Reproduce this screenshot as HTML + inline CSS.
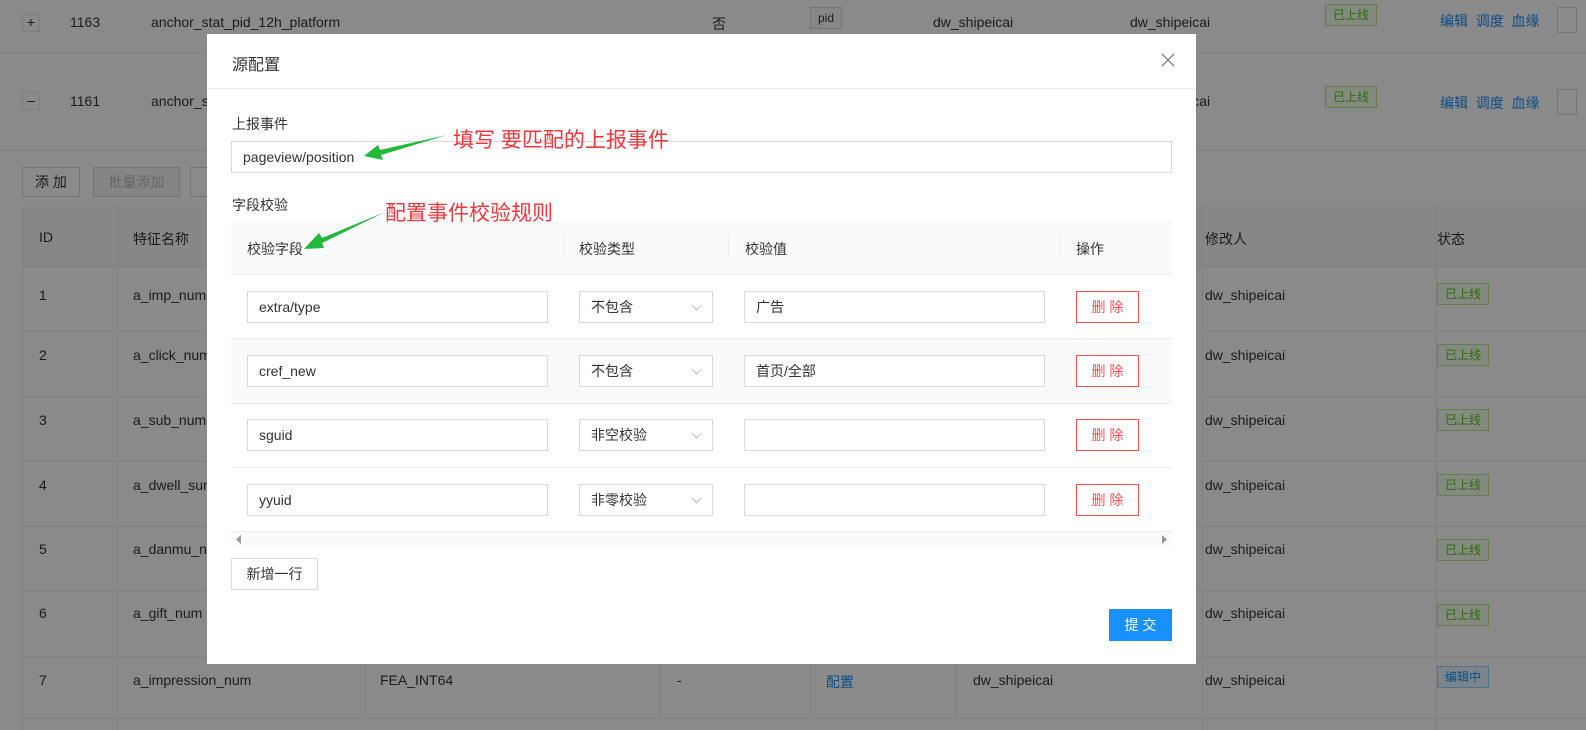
<!DOCTYPE html>
<html><head><meta charset="utf-8"><style>
*{box-sizing:border-box;margin:0;padding:0}
body{width:1586px;height:730px;position:relative;overflow:hidden;background:#fff;font-family:"Liberation Sans","Noto Sans CJK SC",sans-serif;font-size:14px;color:#333}
.a{position:absolute;white-space:nowrap}
.hl{position:absolute;height:1px;background:#ececec}
.vl{position:absolute;width:1px;background:#ececec}
.tag{position:absolute;font-size:12px;border:1px solid #b7eb8f;background:#f6ffed;color:#52c41a;padding:0 7px;height:22px;line-height:20px}
.lk{color:#1890ff}
.btn{position:absolute;border:1px solid #d9d9d9;background:#fff;height:30px;line-height:28px;text-align:center;font-size:14px}
.ov{position:absolute;left:0;top:0;width:1586px;height:730px;background:rgba(0,0,0,.46)}
.modal{position:absolute;left:207px;top:34px;width:989px;height:630px;background:#fff}
.inp{position:absolute;height:32px;border:1px solid #d9d9d9;padding-left:11px;line-height:30px;font-size:14px;color:#333}
.del{position:absolute;height:32px;width:63px;border:1px solid #ff4d4f;color:#ff4d4f;text-align:center;line-height:30px;font-size:14px}
.chev{position:absolute;right:12px;top:10px;width:7px;height:7px;border-right:1px solid #bfbfbf;border-bottom:1px solid #bfbfbf;transform:rotate(45deg)}
</style></head><body>
<div class="a" style="left:22px;top:14px;width:18px;height:18px;border:1px solid #e8e8e8;text-align:center;line-height:15px">+</div>
<div class="a" style="left:70px;top:14px">1163</div>
<div class="a" style="left:151px;top:14px">anchor_stat_pid_12h_platform</div>
<div class="a" style="left:712px;top:14px">否</div>
<div class="a" style="left:810px;top:7px;border:1px solid #d9d9d9;background:#fafafa;font-size:12px;padding:0 7px;height:22px;line-height:20px">pid</div>
<div class="a" style="left:933px;top:14px">dw_shipeicai</div>
<div class="a" style="left:1130px;top:14px">dw_shipeicai</div>
<div class="tag" style="left:1325px;top:4px">已上线</div>
<div class="a lk" style="left:1440px;top:11px">编辑 &nbsp;调度 &nbsp;血缘</div>
<div class="a" style="left:1557px;top:7px;width:20px;height:26px;border:1px solid #d9d9d9"></div>
<div class="hl" style="left:0;top:52px;width:1586px"></div>
<div class="a" style="left:22px;top:92px;width:18px;height:18px;border:1px solid #e8e8e8;text-align:center;line-height:15px">–</div>
<div class="a" style="left:70px;top:93px">1161</div>
<div class="a" style="left:151px;top:93px">anchor_stat</div>
<div class="a" style="left:1130px;top:93px">dw_shipeicai</div>
<div class="tag" style="left:1325px;top:86px">已上线</div>
<div class="a lk" style="left:1440px;top:93px">编辑 &nbsp;调度 &nbsp;血缘</div>
<div class="a" style="left:1557px;top:89px;width:20px;height:26px;border:1px solid #d9d9d9"></div>
<div class="hl" style="left:0;top:150px;width:1586px"></div>
<div class="btn" style="left:22px;top:167px;width:58px">添 加</div>
<div class="btn" style="left:93px;top:167px;width:87px;color:#bbb;background:#f5f5f5">批量添加</div>
<div class="btn" style="left:190px;top:167px;width:60px">删</div>
<div class="a" style="left:22px;top:206px;width:1564px;height:61px;background:#fafafa"></div>
<div class="a" style="left:39px;top:229px">ID</div>
<div class="a" style="left:133px;top:229px">特征名称</div>
<div class="a" style="left:1205px;top:229px">修改人</div>
<div class="a" style="left:1437px;top:229px">状态</div>
<div class="vl" style="left:117px;top:206px;height:524px"></div>
<div class="vl" style="left:1202px;top:206px;height:524px"></div>
<div class="vl" style="left:1436px;top:206px;height:524px"></div>
<div class="vl" style="left:22px;top:206px;height:524px"></div>
<div class="hl" style="left:22px;top:266px;width:1564px"></div>
<div class="hl" style="left:22px;top:331px;width:1564px"></div>
<div class="hl" style="left:22px;top:396px;width:1564px"></div>
<div class="hl" style="left:22px;top:461px;width:1564px"></div>
<div class="hl" style="left:22px;top:526px;width:1564px"></div>
<div class="hl" style="left:22px;top:591px;width:1564px"></div>
<div class="hl" style="left:22px;top:656px;width:1564px"></div>
<div class="hl" style="left:22px;top:718px;width:1564px"></div>
<div class="a" style="left:39px;top:287px">1</div><div class="a" style="left:133px;top:287px">a_imp_num</div><div class="a" style="left:1205px;top:287px">dw_shipeicai</div><div class="tag" style="left:1437px;top:283px">已上线</div>
<div class="a" style="left:39px;top:347px">2</div><div class="a" style="left:133px;top:347px">a_click_num</div><div class="a" style="left:1205px;top:347px">dw_shipeicai</div><div class="tag" style="left:1437px;top:344px">已上线</div>
<div class="a" style="left:39px;top:412px">3</div><div class="a" style="left:133px;top:412px">a_sub_num</div><div class="a" style="left:1205px;top:412px">dw_shipeicai</div><div class="tag" style="left:1437px;top:409px">已上线</div>
<div class="a" style="left:39px;top:477px">4</div><div class="a" style="left:133px;top:477px">a_dwell_sum</div><div class="a" style="left:1205px;top:477px">dw_shipeicai</div><div class="tag" style="left:1437px;top:474px">已上线</div>
<div class="a" style="left:39px;top:541px">5</div><div class="a" style="left:133px;top:541px">a_danmu_num</div><div class="a" style="left:1205px;top:541px">dw_shipeicai</div><div class="tag" style="left:1437px;top:539px">已上线</div>
<div class="a" style="left:39px;top:605px">6</div><div class="a" style="left:133px;top:605px">a_gift_num</div><div class="a" style="left:1205px;top:605px">dw_shipeicai</div><div class="tag" style="left:1437px;top:604px">已上线</div>
<div class="a" style="left:39px;top:672px">7</div><div class="a" style="left:133px;top:672px">a_impression_num</div><div class="a" style="left:380px;top:672px">FEA_INT64</div><div class="a" style="left:677px;top:672px">-</div><div class="a lk" style="left:826px;top:672px">配置</div><div class="a" style="left:973px;top:672px">dw_shipeicai</div><div class="a" style="left:1205px;top:672px">dw_shipeicai</div><div class="tag" style="left:1437px;top:666px;border-color:#91d5ff;background:#e6f7ff;color:#1890ff">编辑中</div>
<div class="vl" style="left:365px;top:656px;height:62px"></div><div class="vl" style="left:660px;top:656px;height:62px"></div><div class="vl" style="left:810px;top:656px;height:62px"></div><div class="vl" style="left:956px;top:656px;height:62px"></div>
<div class="ov"></div>
<div class="modal">
<div class="a" style="left:25px;top:17px;font-size:16px;color:#333">源配置</div>
<svg class="a" style="left:954px;top:19px" width="14" height="14" viewBox="0 0 14 14"><path d="M1 1L13 13M13 1L1 13" stroke="#888" stroke-width="1.4"/></svg>
<div class="hl" style="left:0;top:54px;width:989px"></div>
<div class="a" style="left:25px;top:80px">上报事件</div>
<div class="inp" style="left:24px;top:107px;width:941px">pageview/position</div>
<div class="a" style="left:25px;top:161px">字段校验</div>
<div class="a" style="left:24px;top:186px;width:941px;height:54px;background:#fafafa"></div>
<div class="a" style="left:40px;top:205px">校验字段</div>
<div class="a" style="left:372px;top:205px">校验类型</div>
<div class="a" style="left:538px;top:205px">校验值</div>
<div class="a" style="left:869px;top:205px">操作</div>
<div class="vl" style="left:356px;top:202px;height:22px;background:#ececec"></div>
<div class="vl" style="left:521px;top:202px;height:22px;background:#ececec"></div>
<div class="vl" style="left:853px;top:202px;height:22px;background:#ececec"></div>
<div class="hl" style="left:24px;top:240px;width:941px"></div>
<div class="a" style="left:24px;top:305px;width:941px;height:64px;background:#fafafa"></div>
<div class="hl" style="left:24px;top:304px;width:941px"></div>
<div class="hl" style="left:24px;top:369px;width:941px"></div>
<div class="hl" style="left:24px;top:433px;width:941px"></div>
<div class="hl" style="left:24px;top:497px;width:941px"></div>
<div class="inp" style="left:40px;top:257px;width:301px">extra/type</div>
<div class="inp" style="left:372px;top:257px;width:134px">不包含<i class="chev"></i></div>
<div class="inp" style="left:537px;top:257px;width:301px">广告</div>
<div class="del" style="left:869px;top:257px">删 除</div>
<div class="inp" style="left:40px;top:321px;width:301px;background:#fff">cref_new</div>
<div class="inp" style="left:372px;top:321px;width:134px;background:#fff">不包含<i class="chev"></i></div>
<div class="inp" style="left:537px;top:321px;width:301px;background:#fff">首页/全部</div>
<div class="del" style="left:869px;top:321px;background:#fff">删 除</div>
<div class="inp" style="left:40px;top:385px;width:301px">sguid</div>
<div class="inp" style="left:372px;top:385px;width:134px">非空校验<i class="chev"></i></div>
<div class="inp" style="left:537px;top:385px;width:301px"></div>
<div class="del" style="left:869px;top:385px">删 除</div>
<div class="inp" style="left:40px;top:450px;width:301px">yyuid</div>
<div class="inp" style="left:372px;top:450px;width:134px">非零校验<i class="chev"></i></div>
<div class="inp" style="left:537px;top:450px;width:301px"></div>
<div class="del" style="left:869px;top:450px">删 除</div>
<div class="a" style="left:24px;top:498px;width:941px;height:15px;background:#fafafa"></div>
<svg class="a" style="left:28px;top:501px" width="8" height="9"><path d="M6 0L1 4.5L6 9Z" fill="#999"/></svg>
<svg class="a" style="left:953px;top:501px" width="8" height="9"><path d="M2 0L7 4.5L2 9Z" fill="#999"/></svg>
<div class="btn" style="left:24px;top:524px;width:87px;height:32px;line-height:30px">新增一行</div>
<div class="btn" style="left:902px;top:575px;width:63px;height:32px;line-height:30px;background:#1890ff;border-color:#1890ff;color:#fff">提 交</div>
</div>
<div class="a" style="left:453px;top:124px;font-size:21px;color:#f5363a">填写 要匹配的上报事件</div>
<div class="a" style="left:385px;top:197px;font-size:21px;color:#f5363a">配置事件校验规则</div>
<svg class="a" style="left:0;top:0" width="1586" height="730"><path d="M447 135L380 150L378 145L364 156L383 160L381 155Z" fill="#22b83a"/><path d="M385 212L322 238L319 233L304 249L324 248L322 243Z" fill="#22b83a"/></svg>
</body></html>
